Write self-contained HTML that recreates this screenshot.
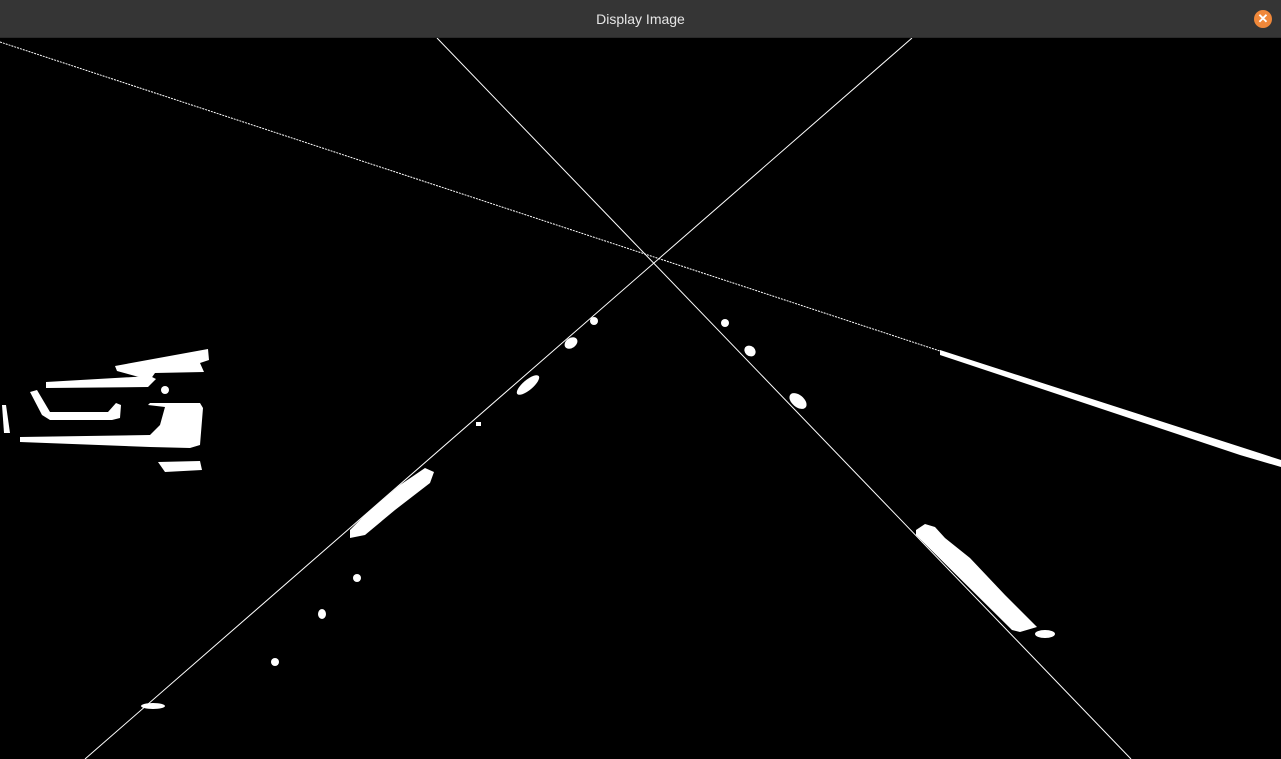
<!DOCTYPE html>
<html><head><style>
body{margin:0;width:1281px;height:759px;overflow:hidden;background:#000}
.bar{position:absolute;left:0;top:0;width:1281px;height:37px;background:#353535;border-bottom:1px solid #2a2a2a;color:#e6e6e6;font:14px "Liberation Sans",sans-serif;text-align:center;line-height:38px}
.x{position:absolute;left:1254px;top:10px;width:18px;height:18px;border-radius:50%;background:#f0883a;color:#fff;font:bold 13px/18px "Liberation Sans",sans-serif;text-align:center}
svg{position:absolute;left:0;top:38px}
</style></head><body>
<div class="bar">Display Image<div class="x">✕</div></div>
<svg width="1281" height="721" viewBox="0 38 1281 721">
<g stroke="#fff" stroke-width="1" fill="none">
<line x1="0" y1="42" x2="940" y2="351" stroke-dasharray="2 1"/>
<line x1="437" y1="38" x2="1131" y2="759"/>
<line x1="912" y1="38" x2="85" y2="759"/>
</g>
<g fill="#fff">
<polygon points="940,350 1281,460 1281,467 1240,455 940,355"/>
<polygon points="115,366 208,349 209,360 200,363 204,372 155,373 150,380 117,371"/>
<polygon points="46,382 150,376 156,379 148,387 46,388"/>
<polygon points="30,392 37,390 50,412 108,412 116,403 121,405 120,418 112,420 50,420 42,415"/>
<polygon points="2,405 6,405 10,433 4,433"/>
<polygon points="20,437 150,435 160,425 165,407 148,405 150,403 200,403 203,408 200,445 190,448 150,447 20,442"/>
<circle cx="165" cy="390" r="4"/>
<polygon points="158,462 200,461 202,470 165,472"/>
<polygon points="916,530 925,524 935,527 945,538 970,558 1005,595 1037,627 1020,632 1012,630 916,535"/>
<ellipse cx="1045" cy="634" rx="10" ry="4"/>
<ellipse cx="725" cy="323" rx="4" ry="4"/>
<ellipse cx="750" cy="351" rx="6" ry="5" transform="rotate(40 750 351)"/>
<ellipse cx="798" cy="401" rx="10" ry="6" transform="rotate(40 798 401)"/>
<ellipse cx="594" cy="321" rx="4" ry="4"/>
<ellipse cx="571" cy="343" rx="7" ry="5" transform="rotate(-35 571 343)"/>
<ellipse cx="528" cy="385" rx="14" ry="5" transform="rotate(-40 528 385)"/>
<rect x="476" y="422" width="5" height="4"/>
<polygon points="350,530 365,515 400,485 425,468 434,472 430,483 395,510 365,535 350,538"/>
<ellipse cx="357" cy="578" rx="4" ry="4"/>
<ellipse cx="322" cy="614" rx="4" ry="5"/>
<ellipse cx="275" cy="662" rx="4" ry="4"/>
<ellipse cx="153" cy="706" rx="12" ry="3"/>
</g>
</svg>
</body></html>
